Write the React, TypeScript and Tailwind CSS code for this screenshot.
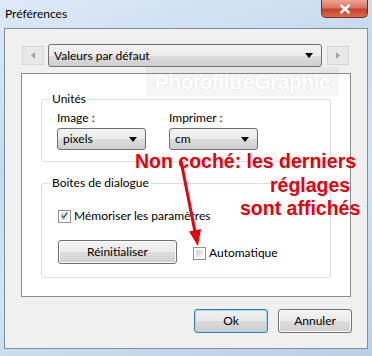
import React from "react";

const ui = { fontFamily: 'Lato, "Noto Sans", sans-serif' };

function Triangle({ className = "" }: { className?: string }) {
  return (
    <svg width="8" height="5" viewBox="0 0 8 5" className={className}>
      <path d="M0 0 H8 L4 5 Z" fill="#000" />
    </svg>
  );
}

function Combo({ label, width }: { label: string; width: string }) {
  return (
    <div
      className={`${width} h-[22px] flex items-center justify-between pl-[5px] pr-[8px] rounded-[3px] border border-[#707070] bg-[linear-gradient(#f2f2f2_0%,#ebebeb_50%,#dddddd_51%,#cfcfcf_100%)] text-[12px] text-black`}
    >
      <span>{label}</span>
      <Triangle />
    </div>
  );
}

function Checkbox({ checked }: { checked?: boolean }) {
  return (
    <div className="w-[13px] h-[13px] border border-[#8e8f8f] bg-white p-[2px] shrink-0">
      <div className="w-full h-full bg-[linear-gradient(135deg,#cbcfd5,#f6f6f6)] flex items-center justify-center">
        {checked && (
          <svg width="9" height="9" viewBox="0 0 9 9" className="-mt-[1px]">
            <path d="M1 4.5 L3.5 7.5 L8 0.5" stroke="#3d5a98" strokeWidth="1.8" fill="none" />
          </svg>
        )}
      </div>
    </div>
  );
}

function WinButton({ children, width, primary }: { children: React.ReactNode; width: string; primary?: boolean }) {
  return (
    <div
      className={`${width} h-[24px] flex items-center justify-center rounded-[3px] border ${
        primary
          ? "border-[#3c7fb1] shadow-[inset_0_0_0_1px_#9fd8f5] bg-[linear-gradient(#f0f0f0_0%,#e8e8e8_50%,#dadada_51%,#cdcdcd_100%)]"
          : "border-[#707070] shadow-[inset_0_0_0_1px_#fcfcfc] bg-[linear-gradient(#f2f2f2_0%,#ebebeb_50%,#dddddd_51%,#cfcfcf_100%)]"
      } text-[12px] text-black`}
    >
      {children}
    </div>
  );
}

function GroupBox({ title, height, children }: { title: string; height: string; children: React.ReactNode }) {
  return (
    <div className={`relative ${height} ml-[19px] w-[290px] rounded-[3px] border border-[#d5dfe5]`}>
      <span className="absolute -top-[10px] left-[8px] bg-white px-[2px] text-[12px] text-black leading-[18px]">
        {title}
      </span>
      {children}
    </div>
  );
}

function NavButton({ dir }: { dir: "left" | "right" }) {
  return (
    <div className="w-[22px] h-[19px] flex items-center justify-center border border-[#d6d6d6] bg-[#e8e8e8]">
      <svg width="4" height="7" viewBox="0 0 4 7">
        <path d={dir === "left" ? "M4 0 V7 L0 3.5 Z" : "M0 0 V7 L4 3.5 Z"} fill="#9aa4ae" />
      </svg>
    </div>
  );
}

export default function App() {
  return (
    <div
      style={ui}
      className="relative w-[372px] h-[356px] overflow-hidden bg-[linear-gradient(160deg,#dde9f6_0%,#c6daee_35%,#d3e3f2_60%,#b8cfe7_100%)]"
    >
      {/* title bar */}
      <div className="h-[28px] flex items-start justify-between pl-[5px] pr-[4px]">
        <span className="mt-[5px] text-[12px] text-black">Préférences</span>
        <div className="w-[47px] h-[18px] flex items-center justify-center rounded-b-[5px] border border-t-0 border-[#7a2a1e] bg-[linear-gradient(#eba796_0%,#d97560_45%,#c7402a_55%,#dd6a4c_100%)]">
          <svg width="12" height="10" viewBox="0 0 12 10">
            <path d="M1.5 1 L10.5 9 M10.5 1 L1.5 9" stroke="#fff" strokeWidth="2.4" />
          </svg>
        </div>
      </div>

      {/* client area */}
      <div className="mx-[4px] h-[321px] border border-[#7d8fa3] bg-[#f0f0f0] flex flex-col">
        <div className="mt-[15px] ml-[17px] flex items-center gap-[4px]">
          <NavButton dir="left" />
          <div className="w-[274px] h-[23px] flex items-center justify-between pl-[5px] pr-[8px] rounded-[3px] border border-[#707070] bg-[linear-gradient(#f2f2f2_0%,#ebebeb_50%,#dddddd_51%,#cfcfcf_100%)] text-[12px] text-black">
            <span>Valeurs par défaut</span>
            <Triangle />
          </div>
          <div className="ml-[1px]">
            <NavButton dir="right" />
          </div>
        </div>

        <div className="mt-[6px] ml-[16px] w-[330px] h-[224px] border border-[#898c95] bg-white pt-[25px]">
          <GroupBox title="Unités" height="h-[63px]">
            <div className="flex gap-[23px] pl-[15px] pt-[10px]">
              <div className="flex flex-col gap-[2px]">
                <span className="text-[12px] leading-[16px] text-black">Image :</span>
                <Combo label="pixels" width="w-[89px]" />
              </div>
              <div className="flex flex-col gap-[2px]">
                <span className="text-[12px] leading-[16px] text-black">Imprimer :</span>
                <Combo label="cm" width="w-[89px]" />
              </div>
            </div>
          </GroupBox>

          <div className="mt-[21px]">
            <GroupBox title="Boites de dialogue" height="h-[95px]">
              <div className="pl-[16px] pt-[25px] flex items-center gap-[3px]">
                <Checkbox checked />
                <span className="text-[12px] leading-[14px] text-black">Mémoriser les paramètres</span>
              </div>
              <div className="pl-[16px] mt-[17px] flex items-center">
                <WinButton width="w-[119px]">Réinitialiser</WinButton>
                <div className="ml-[16px] mt-[2px] flex items-center gap-[3px]">
                  <Checkbox />
                  <span className="text-[12px] leading-[14px] text-black">Automatique</span>
                </div>
              </div>
            </GroupBox>
          </div>
        </div>

        <div className="mt-[12px] flex justify-end gap-[10px] pr-[15px]">
          <WinButton width="w-[74px]" primary>Ok</WinButton>
          <WinButton width="w-[74px]">Annuler</WinButton>
        </div>
      </div>

      {/* watermark */}
      <div className="absolute left-[146px] top-[67px] w-[193px] h-[29px] bg-[rgba(0,0,0,0.04)] flex items-center justify-center">
        <span
          className="text-[21px] font-bold text-white tracking-[-0.5px] [text-shadow:0_0_1px_#d0d0d0]"
          style={{ fontFamily: '"Liberation Sans", Arial, sans-serif' }}
        >
          PhotofiltreGraphic
        </span>
      </div>

      {/* annotation */}
      <div
        className="absolute inset-0 pointer-events-none text-[#e8000b] font-bold text-[19.5px] leading-[22px]"
        style={{ fontFamily: '"Liberation Sans", Arial, sans-serif' }}
      >
        <span className="absolute left-[135px] top-[150px]">Non coché: les derniers</span>
        <span className="absolute left-[270px] top-[174px]">réglages</span>
        <span className="absolute left-[240px] top-[197px]">sont affichés</span>
      </div>
      <svg className="absolute inset-0 pointer-events-none" width="372" height="356" viewBox="0 0 372 356">
        <line x1="181" y1="161" x2="195" y2="232" stroke="#e8000b" strokeWidth="3" />
        <polygon points="198,246 201,229 189,231.5" fill="#e8000b" />
      </svg>
    </div>
  );
}
